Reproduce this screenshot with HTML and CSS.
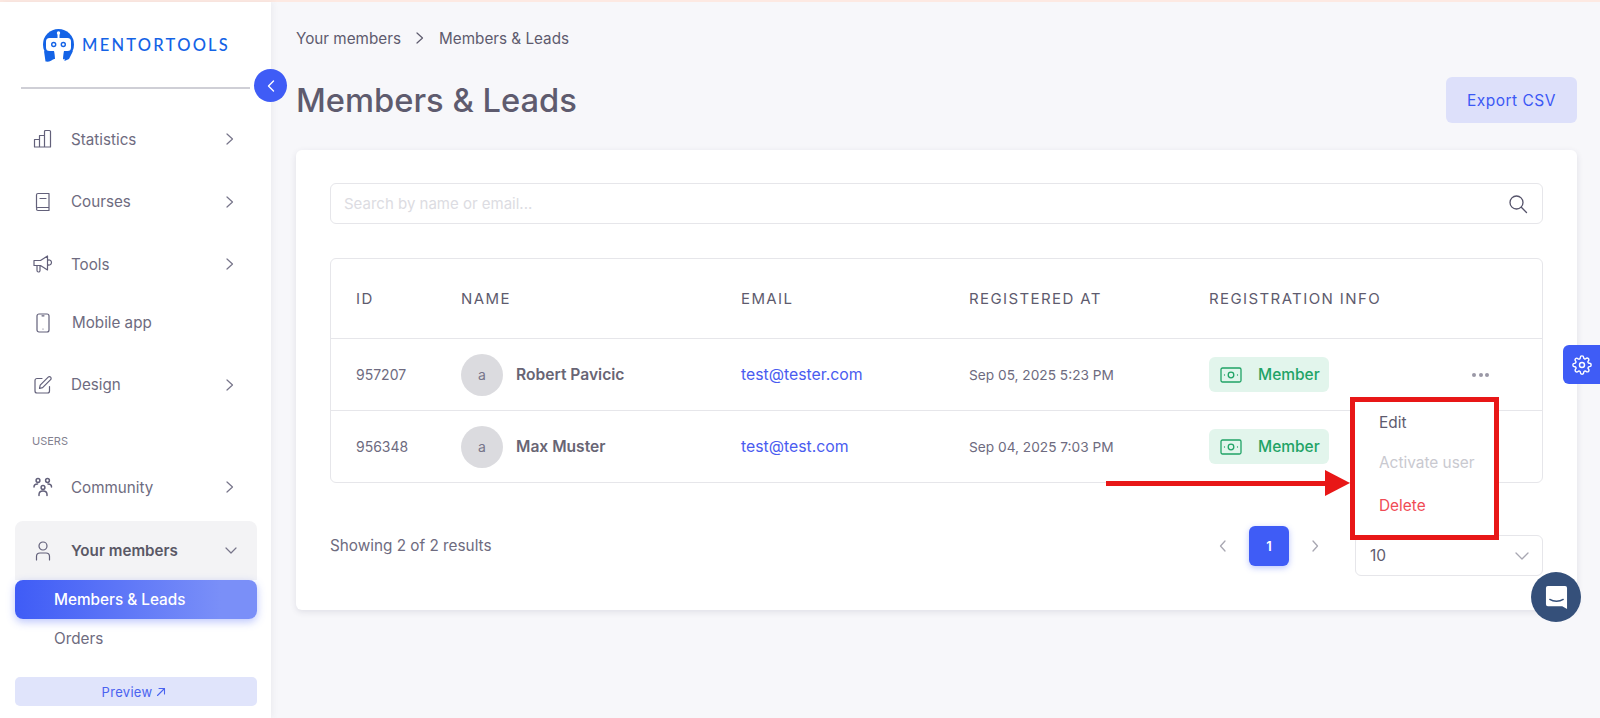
FILE: index.html
```html
<!DOCTYPE html>
<html lang="en">
<head>
<meta charset="utf-8">
<title>Members &amp; Leads</title>
<link rel="stylesheet" href="styles.css">
</head>
<body>
<div class="app">
  <aside class="sidebar">
    <div class="logo">
      <svg class="logo-mark" viewBox="0 0 33 33" width="33" height="33">
        <circle cx="16.500" cy="15.500" r="15.500" fill="#1463e6"/>
        <path fill="#1463e6" d="M2 22l1.500 10.500c3.500.5 6.500-.5 8.500-3L8 24zM31 22l-4 8-4.500 2 .5-7z"/>
        <circle cx="16.500" cy="4" r="1.700" fill="#fff"/>
        <path fill="#fff" d="M15.500 5h2V10h-2z"/>
        <path fill="#fff" d="M7.500 9h18a3.500 3.500 0 0 1 3.500 3.500v6a3.500 3.500 0 0 1-3.500 3.500h-3.500c-.5 2-.8 5-1 8l-8 .5c0-3-.5-6.500-1-8.500H7.500A3.500 3.500 0 0 1 4 18.500v-6A3.500 3.500 0 0 1 7.500 9z"/>
        <path fill="#fff" d="M12 30h9v3h-9z"/>
        <circle cx="11.700" cy="15.500" r="2" fill="none" stroke="#1463e6" stroke-width="1.400"/>
        <circle cx="21.300" cy="15.500" r="2" fill="none" stroke="#1463e6" stroke-width="1.400"/>
      </svg>
      <span class="logo-text">MENTORTOOLS</span>
    </div>
    <div class="logo-rule"></div>
    <nav class="nav">
      <a class="nav-row">
        <svg class="ico" viewBox="0 0 20 20"><path d="M1.500 10.500h5v7.500h-5zM6.500 6.500h5V18h-5zM11.500 2.500a1 1 0 0 1 1-1h4a1 1 0 0 1 1 1V18h-6z"/></svg>
        <span class="nav-label">Statistics</span>
        <svg class="chev" viewBox="0 0 10 14"><path d="M2 2l5.500 5L2 12"/></svg>
      </a>
      <a class="nav-row">
        <svg class="ico" viewBox="0 0 20 20"><path d="M3.500 15.500V3a1.500 1.500 0 0 1 1.500-1.500h11V15.500H5a1.500 1.500 0 0 0-1.500 1.500v0A1.500 1.500 0 0 0 5 18.500h11V15.500M7 6.500h6"/></svg>
        <span class="nav-label">Courses</span>
        <svg class="chev" viewBox="0 0 10 14"><path d="M2 2l5.500 5L2 12"/></svg>
      </a>
      <a class="nav-row">
        <svg class="ico" viewBox="0 0 20 20"><path d="M1 6.500h6.500L14.500 2v14l-7-4.500H1zM4 11.500v5a1.500 1.500 0 0 0 3 0v-5M14.500 6.500a2.500 2.500 0 0 1 4 2 2.500 2.500 0 0 1-4 2"/></svg>
        <span class="nav-label">Tools</span>
        <svg class="chev" viewBox="0 0 10 14"><path d="M2 2l5.500 5L2 12"/></svg>
      </a>
      <a class="nav-row nav-row-short">
        <svg class="ico" viewBox="0 0 20 20"><rect x="4" y="1" width="12" height="18" rx="2"/><path d="M9 2.800h2M10 16h.01"/></svg>
        <span class="nav-label nav-label-nudge">Mobile app</span>
      </a>
      <a class="nav-row nav-row-gap">
        <svg class="ico" viewBox="0 0 20 20"><path d="M9 3.500H4a2 2 0 0 0-2 2V16a2 2 0 0 0 2 2h10.500a2 2 0 0 0 2-2v-4.500M6.500 13.500l.7-3.300 8-8a1.500 1.500 0 0 1 2.400 2.400l-8 8z"/></svg>
        <span class="nav-label">Design</span>
        <svg class="chev" viewBox="0 0 10 14"><path d="M2 2l5.500 5L2 12"/></svg>
      </a>
      <div class="nav-section">USERS</div>
      <a class="nav-row">
        <svg class="ico ico-heavy" viewBox="0 0 20 20"><circle cx="5" cy="3.500" r="1.900"/><circle cx="14.500" cy="3.500" r="1.900"/><circle cx="10" cy="10.500" r="1.900"/><path d="M1 10c0-2 1.500-3 3.500-3M18.500 10c0-2-1.500-3-3.500-3M6 18.500v-1c0-2 1.500-3.500 4-3.500s4 1.500 4 3.500v1"/></svg>
        <span class="nav-label">Community</span>
        <svg class="chev" viewBox="0 0 10 14"><path d="M2 2l5.500 5L2 12"/></svg>
      </a>
      <a class="nav-row nav-row-open">
        <svg class="ico" viewBox="0 0 20 20"><circle cx="10" cy="5" r="4"/><path d="M3.500 19v-3.500c0-2.500 2-3.500 3.500-3.500h6c1.500 0 3.500 1 3.500 3.500V19"/></svg>
        <span class="nav-label nav-label-strong">Your members</span>
        <svg class="chev-down" viewBox="0 0 14 10"><path d="M2 2l5 5 5-5"/></svg>
      </a>
      <a class="sub-row sub-row-active">Members &amp; Leads</a>
      <a class="sub-row">Orders</a>
    </nav>
    <a class="preview">Preview <svg class="preview-ico" viewBox="0 0 10 10"><path d="M1.500 8.500l7-7M3 1.500h5.500V7"/></svg></a>
    <button class="collapse" type="button"><svg viewBox="0 0 10 14" width="10" height="14"><path d="M7.500 2L2.500 7l5 5"/></svg></button>
  </aside>

  <main class="main">
    <div class="crumbs">
      <span>Your members</span>
      <svg class="crumb-sep" viewBox="0 0 10 14"><path d="M2 2l5.500 5L2 12"/></svg>
      <span>Members &amp; Leads</span>
    </div>
    <div class="head">
      <h1 class="title">Members &amp; Leads</h1>
      <button class="export" type="button">Export CSV</button>
    </div>
    <section class="card">
      <div class="search">
        <span class="search-ph">Search by name or email...</span>
        <svg class="search-ico" viewBox="0 0 20 20"><circle cx="8.500" cy="8.500" r="6.500"/><path d="M13.300 13.300L18.500 18.500"/></svg>
      </div>
      <div class="table">
        <div class="tr tr-head">
          <div>ID</div><div>NAME</div><div>EMAIL</div><div>REGISTERED AT</div><div>REGISTRATION INFO</div><div></div>
        </div>
        <div class="tr">
          <div class="td-id">957207</div>
          <div class="td-name"><span class="avatar">a</span><span class="name">Robert Pavicic</span></div>
          <div class="td-email">test@tester.com</div>
          <div class="td-date">Sep 05, 2025 5:23 PM</div>
          <div class="td-badge"><span class="badge"><svg class="badge-ico" viewBox="0 0 22 16"><rect x="1" y="1" width="20" height="14" rx="1.500"/><circle cx="11" cy="8" r="2.800"/><path d="M4.500 8h.01M17.500 8h.01"/></svg>Member</span></div>
          <div class="td-more"><span class="dots"><i></i><i></i><i></i></span></div>
        </div>
        <div class="tr tr-last">
          <div class="td-id">956348</div>
          <div class="td-name"><span class="avatar">a</span><span class="name">Max Muster</span></div>
          <div class="td-email">test@test.com</div>
          <div class="td-date">Sep 04, 2025 7:03 PM</div>
          <div class="td-badge"><span class="badge"><svg class="badge-ico" viewBox="0 0 22 16"><rect x="1" y="1" width="20" height="14" rx="1.500"/><circle cx="11" cy="8" r="2.800"/><path d="M4.500 8h.01M17.500 8h.01"/></svg>Member</span></div>
          <div></div>
        </div>
      </div>
      <div class="foot">
        <span class="showing">Showing 2 of 2 results</span>
        <div class="pager">
          <svg class="pg-chev" viewBox="0 0 10 14"><path d="M7 2L2.500 7 7 12"/></svg>
          <span class="pg-num">1</span>
          <svg class="pg-chev" viewBox="0 0 10 14"><path d="M3 2l4.500 5L3 12"/></svg>
        </div>
        <div class="select"><span>10</span><svg class="select-ico" viewBox="0 0 14 8"><path d="M1 1l6 6 6-6"/></svg></div>
      </div>
      <div class="menu">
        <div class="menu-item">Edit</div>
        <div class="menu-item menu-off">Activate user</div>
        <div class="menu-item menu-del">Delete</div>
      </div>
      <div class="arrow"><span class="arrow-line"></span><span class="arrow-head"></span></div>
    </section>
  </main>
  <button class="gear" type="button"><svg viewBox="0 0 24 24" width="20" height="20"><circle cx="12" cy="12" r="3"/><path d="M19.400 15a1.650 1.650 0 0 0 .33 1.820l.06.060a2 2 0 1 1-2.830 2.830l-.06-.060a1.650 1.650 0 0 0-2.820 1.170V21a2 2 0 1 1-4 0v-.090A1.650 1.650 0 0 0 7.250 19.700l-.06.060a2 2 0 1 1-2.830-2.830l.06-.060a1.650 1.650 0 0 0-1.170-2.820H3a2 2 0 1 1 0-4h.090A1.650 1.650 0 0 0 4.300 7.250l-.06-.060a2 2 0 1 1 2.830-2.830l.06.060a1.650 1.650 0 0 0 2.820-1.170V3a2 2 0 1 1 4 0v.090a1.650 1.650 0 0 0 2.800 1.170l.06-.060a2 2 0 1 1 2.830 2.830l-.06.060a1.650 1.650 0 0 0 1.170 2.820H21a2 2 0 1 1 0 4h-.090a1.650 1.650 0 0 0-1.510 1z"/></svg></button>
  <button class="chat" type="button"><svg viewBox="0 0 24 26" width="23" height="25"><path fill="#fff" d="M3 1h18a2 2 0 0 1 2 2v22l-5-3H3a2 2 0 0 1-2-2V3a2 2 0 0 1 2-2z"/><path fill="none" stroke="#35507a" stroke-width="1.400" stroke-linecap="round" d="M5 15c4 2.500 10 2.500 14 0"/></svg></button>
</div>
</body>
</html>
```
FILE: styles.css
```css
* { box-sizing: border-box; }
html, body { margin: 0; height: 100%; }
body { font-family: Inter, "Liberation Sans", sans-serif; color: #5e5b6e; background: #f7f7fa; overflow: hidden; }
button { font: inherit; border: 0; cursor: pointer; }
svg { display: block; fill: none; stroke: currentColor; stroke-linecap: round; stroke-linejoin: round; }

.app { position: relative; display: flex; height: 718px; border-top: 2px solid #fde9e2; }

.sidebar { position: relative; width: 271px; flex: none; background: #fff; padding: 0 14px 0 15px; box-shadow: 2px 0 6px rgba(60,60,90,.06); display: flex; flex-direction: column; }
.logo { display: flex; align-items: center; gap: 7px; height: 54px; margin-top: 16px; padding-left: 27px; }
.logo-mark { flex: none; stroke: none; }
.logo-text { font-family: Lato, sans-serif; font-size: 16.500px; letter-spacing: 2.250px; color: #1463e6; font-weight: 500; }
.logo-rule { height: 2px; margin: 15px 0 0 6px; width: 229px; background: #cfcfd6; }
.nav { display: flex; flex-direction: column; margin-top: 19px; }
.nav-row { display: flex; align-items: center; height: 62.500px; padding: 0 22px 0 18px; font-size: 15.200px; color: #6e6b80; }
.nav-row-short { height: 54px; }
.nav-row-gap { margin-top: 4px; }
.nav-row-open { height: 59px; background: #f3f3f5; border-radius: 8px 8px 0 0; margin-top: 2.500px; }
.ico { width: 20px; height: 20px; flex: none; stroke: #62607a; stroke-width: 1.200; margin-right: 18px; }
.ico-heavy { stroke-width: 1.500; }
.nav-label { flex: 1; }
.nav-label-nudge { padding-left: 1px; }
.nav-label-strong { font-weight: 600; color: #5a5866; }
.chev { width: 10px; height: 14px; stroke: #77758a; stroke-width: 1.200; }
.chev-down { width: 14px; height: 10px; stroke: #77758a; stroke-width: 1.200; margin-right: -3px; }
.nav-section { font-size: 11px; color: #83818f; padding-left: 17px; height: 20px; margin-top: 15px; margin-bottom: 5px; line-height: 20px; }
.sub-row { display: flex; align-items: center; height: 39px; padding-left: 39px; font-size: 15.300px; color: #6e6b80; }
.sub-row-active { color: #fff; font-weight: 500; border-radius: 8px; background: linear-gradient(90deg, #3f5cf6 0%, #7a8ff8 85%); box-shadow: 0 3px 8px rgba(63,92,246,.35); }
.preview { display: flex; align-items: center; justify-content: center; gap: 4px; height: 29px; margin-top: 19px; padding-right: 4px; background: #e0e4fb; color: #4a63f0; border-radius: 5px; font-size: 13px; letter-spacing: .3px; }
.preview-ico { width: 10px; height: 10px; stroke-width: 1.100; }
.collapse { position: absolute; top: 67px; left: 254px; width: 33px; height: 33px; border-radius: 50%; background: #3f5cf6; color: #fff; display: flex; align-items: center; justify-content: center; padding: 0; z-index: 3; }
.collapse svg { stroke-width: 1.400; }

.main { flex: 1; padding: 0 23px 0 25px; min-width: 0; }
.crumbs { display: flex; align-items: center; gap: 14px; height: 30px; margin-top: 21px; font-size: 15.250px; color: #5e5b6e; }
.crumb-sep { width: 10px; height: 14px; stroke-width: 1.200; }
.head { display: flex; align-items: center; justify-content: space-between; height: 72px; margin-top: 11px; }
.title { margin: 0; font-size: 32.700px; font-weight: 500; color: #5e5b6e; }
.export { width: 131px; height: 46px; background: #dde0fa; color: #3b58f5; font-size: 15.500px; border-radius: 6px; letter-spacing: .5px; }

.card { position: relative; margin-top: 14px; height: 460px; background: #fff; border-radius: 6px; box-shadow: 0 2px 6px rgba(60,60,90,.12); padding: 33px 34px 0 34px; }
.search { display: flex; align-items: center; justify-content: space-between; height: 41px; border: 1px solid #e6e6ea; border-radius: 6px; padding: 0 14px 0 13px; }
.search-ph { font-size: 15px; color: #dcdce2; }
.search-ico { width: 20px; height: 20px; stroke: #55536a; stroke-width: 1.300; }
.table { margin-top: 34px; border: 1px solid #e6e6ea; border-radius: 6px; }
.tr { display: grid; grid-template-columns: 105px 280px 228px 240px 1fr 70px; align-items: center; height: 72px; padding-left: 25px; border-bottom: 1px solid #e6e6ea; font-size: 14px; }
.tr-last { border-bottom: 0; height: 71px; }
.tr-head { height: 80px; font-size: 15px; letter-spacing: 1.400px; font-weight: 400; color: #5e5b6e; }
.td-id { font-size: 14px; color: #6e6b80; }
.td-date { font-size: 13.700px; color: #6e6b80; }
.td-name { display: flex; align-items: center; gap: 13px; }
.avatar { width: 42px; height: 42px; border-radius: 50%; background: #dbdbdf; color: #77758a; display: flex; align-items: center; justify-content: center; font-size: 14px; }
.name { font-weight: 600; font-size: 15.600px; color: #686574; }
.td-email { color: #4a5cf0; font-size: 15.800px; }
.td-badge { display: flex; }
.badge { display: inline-flex; align-items: center; gap: 16px; height: 35px; padding: 0 9px 0 11px; background: #e2f5ec; color: #21a366; border-radius: 6px; font-size: 15.500px; font-weight: 500; }
.badge-ico { width: 22px; height: 16px; stroke: #21a366; stroke-width: 1.300; }
.td-more { display: flex; }
.dots { display: flex; gap: 2.500px; }
.dots i { width: 4px; height: 4px; border-radius: 50%; background: #9a98a6; }
.foot { display: flex; align-items: flex-start; margin-top: 43px; font-size: 15.300px; color: #6e6b80; }
.showing { flex: 1; line-height: 40px; }
.pager { display: flex; align-items: center; gap: 21px; margin-right: 35px; }
.pg-chev { width: 10px; height: 14px; stroke: #a8a7b2; stroke-width: 1.300; }
.pg-num { width: 40px; height: 40px; border-radius: 6px; background: #3f5cf6; color: #fff; font-size: 13px; font-weight: 600; display: flex; align-items: center; justify-content: center; box-shadow: 0 2px 6px rgba(63,92,246,.35); }
.select { display: flex; align-items: center; justify-content: space-between; width: 188px; height: 41px; margin-top: 9px; border: 1px solid #e6e6ea; border-radius: 6px; padding: 0 13px 0 14px; color: #5e5b6e; font-size: 15.500px; }
.select-ico { width: 14px; height: 8px; stroke: #a8a7b2; stroke-width: 1.300; }

.menu { position: absolute; left: 1054px; top: 247px; width: 149px; height: 143px; background: #fff; border: 5px solid #e81717; padding: 0 0 0 24px; z-index: 2; }
.menu-item { display: flex; align-items: center; height: 40px; font-size: 15.400px; color: #5e5b6e; }
.menu-off { color: #c9c9d0; }
.menu-del { color: #f04b55; margin-top: 3px; }
.arrow { position: absolute; left: 810px; top: 320px; width: 244px; display: flex; align-items: center; z-index: 2; }
.arrow-line { flex: 1; height: 5px; background: #e81717; }
.arrow-head { width: 0; height: 0; border-top: 13px solid transparent; border-bottom: 13px solid transparent; border-left: 25px solid #e81717; }

.gear { position: absolute; right: 0; top: 343px; width: 37px; height: 39px; background: #3f5cf6; color: #fff; border-radius: 6px 0 0 6px; display: flex; align-items: center; justify-content: center; padding: 0; }
.gear svg { stroke-width: 1.700; }
.chat { position: absolute; left: 1531px; top: 570px; width: 50px; height: 50px; border-radius: 50%; background: #35507a; display: flex; align-items: center; justify-content: center; padding: 0; z-index: 4; }
.chat svg { stroke: none; }
```
